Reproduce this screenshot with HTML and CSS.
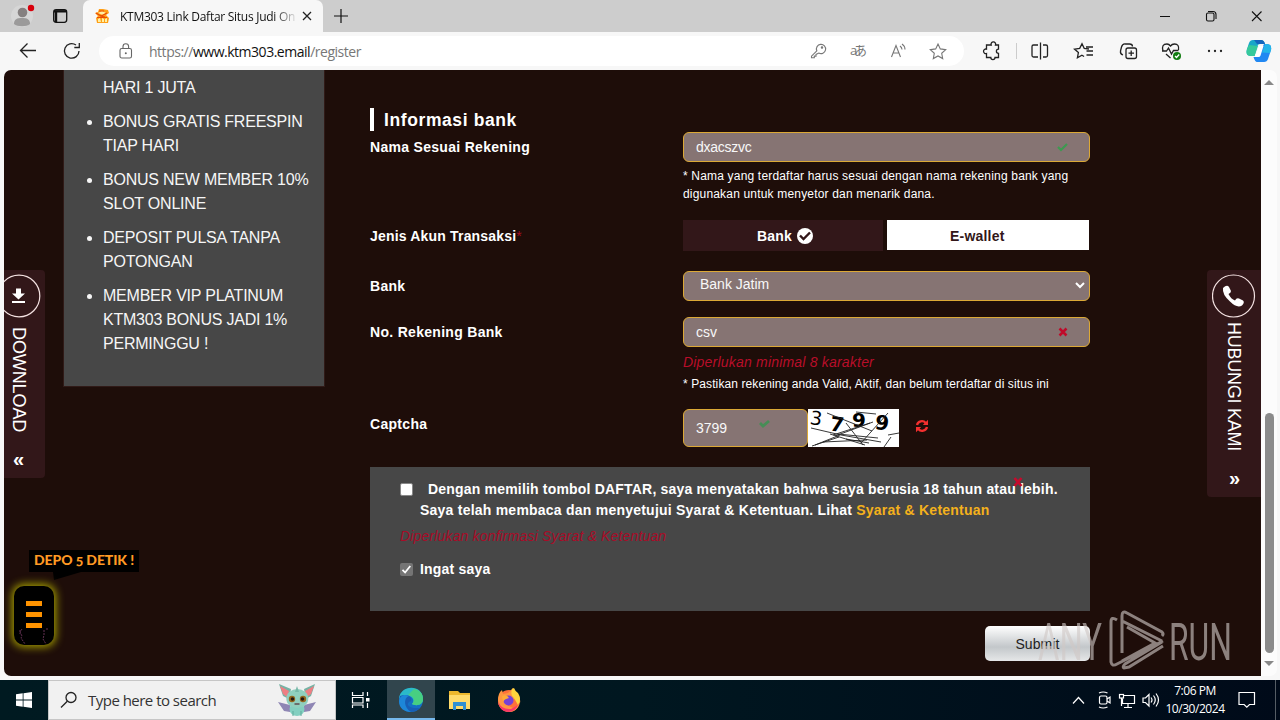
FILE: index.html
```html
<!DOCTYPE html>
<html lang="id">
<head>
<meta charset="utf-8">
<title>KTM303 Register</title>
<link rel="stylesheet" href="styles.css">
</head>
<body>
<div class="tabs">
  <div class="tabs-left">
    <svg width="83" height="32" viewBox="0 0 83 32"><circle cx="22" cy="16" r="11" fill="#d6d6d6"/><circle cx="22.500" cy="12.500" r="4.800" fill="#858080"/><path d="M14 24c0-5 3-6 8-6s8 1 8 6c-3 3-13 3-16 0z" fill="#9b9a9a"/><circle cx="31" cy="8" r="3.200" fill="#d8000c"/><rect x="53.700" y="9.700" width="13" height="12.600" rx="2.500" fill="none" stroke="#111" stroke-width="1.300"/><path d="M54 11.300h12.500" stroke="#111" stroke-width="2.400"/><path d="M56 12v10" stroke="#111" stroke-width="2.400"/></svg>
  </div>
  <div class="tab">
    <svg width="16" height="16" viewBox="0 0 16 16"><path d="M1 5l3-1 1-3 4 0 5 1 1 3-3 2 3 3-1 5H3l-1-5 2-2z" fill="#ff9f17"/><path d="M4 5l4-2 4 2-3 2zM4 11l2-1 1 4-3 0zM8 10l2 1v3H8zM11 11l2-1v4h-2z" fill="#fff0a5"/><path d="M2 5l5 3 6-3M3 9.500h10M5 3l5 0M6 8l5 1" stroke="#e94a05" stroke-width="1.200" fill="none"/></svg>
    <span class="tab-title">KTM303 Link Daftar Situs Judi On</span>
    <svg class="tab-x" width="10" height="10" viewBox="0 0 10 10"><path d="M1 1l8 8M9 1l-8 8" stroke="#222" stroke-width="1.300"/></svg>
  </div>
  <svg class="plus" width="14" height="14" viewBox="0 0 14 14"><path d="M7 0v14M0 7h14" stroke="#111" stroke-width="1.200"/></svg>
  <svg class="winbtns" width="120" height="32" viewBox="0 0 120 32"><path d="M0 16.500h10M92 11.500l9.500 9.500M101.500 11.500L92 21" stroke="#111" stroke-width="1.100"/><rect x="46.500" y="13" width="7.500" height="8" rx="1.500" fill="none" stroke="#111" stroke-width="1.100"/><path d="M48 11.500h5q3 0 3 3v4.500" fill="none" stroke="#111" stroke-width="1.100"/></svg>
</div>
<div class="toolbar">
  <svg class="nav" width="83" height="38" viewBox="0 0 83 38"><path d="M36 18.500H20.500M27.500 11.500l-7 7 7 7" fill="none" stroke="#222" stroke-width="1.300"/><path d="M79 19A7.300 7.300 0 1 1 76 13M79.300 11v4.500h-5" fill="none" stroke="#222" stroke-width="1.300"/></svg>
  <div class="address">
    <svg width="14" height="16" viewBox="0 0 14 16"><rect x="1" y="5.500" width="11.500" height="9.500" rx="1.800" fill="none" stroke="#666" stroke-width="1.100"/><path d="M4 5.500V3.500a2.800 2.800 0 0 1 5.600 0v2" fill="none" stroke="#666" stroke-width="1.100"/><circle cx="6.800" cy="10.200" r="1" fill="#666"/></svg>
    <div class="url">https://<b>www.ktm303.email</b>/register</div>
    <svg class="addr-icons" width="140" height="20" viewBox="0 0 140 20" fill="none" stroke="#777" stroke-width="1.100"><path d="M7.800 9.800L2.500 15.200v1.600h2.800v-1.700h1.700v-1.700l2.800-1.400a4.600 4.600 0 1 0-2-2.200z"/><circle cx="13" cy="6.500" r=".7" fill="#777"/><text class="aa" x="41" y="14" textLength="17">aあ</text><path d="M82.500 16L87 4.500 91.500 16M84 12h6M91 5q2 1.500 2 3.500M93 3q3 2 3 5.500"/><path d="M129 3l2.300 4.900 5.400.7-4 3.700 1 5.300-4.700-2.600-4.700 2.600 1-5.300-4-3.700 5.400-.7z"/></svg>
  </div>
  <svg class="tools" width="281" height="38" viewBox="0 0 281 38" fill="none" stroke="#222" stroke-width="1.300"><path d="M23 13h3.200a2.300 2.300 0 1 1 4.300 0H33.500v4.200a2.100 2.100 0 1 0 0 4.200V25.500h-3.500a2.100 2.100 0 0 1-4.200 0H21.500v-4a2.300 2.300 0 1 1 0-4.400V13z"/><path d="M51.500 11v16" stroke="#ccc" stroke-width="1"/><path d="M73 13h-4.500q-1.500 0-1.500 1.500v9q0 1.500 1.500 1.500h4.500M78 13h3q1.500 0 1.500 1.500v9q0 1.500-1.500 1.500h-3M75.500 10.500v17"/><path d="M124 17l-4.800-.6-2.200-4.700-2.300 4.700-5.200.7 3.900 3.500-1 5.200 4.500-2.600 2.200 1.300M121 15h7M121.500 19h6.500M121.500 23h6.500"/><rect x="161" y="16" width="10.500" height="10.500" rx="2"/><path d="M166.200 18.500v5.500M163.500 21.200h5.500M158 23q-3-1-2.500-4l1-4q1-3.500 4-3h4q3 0 3 2.500"/><path d="M198 19q-2-7 4-7 2 0 3.500 2 1.500-2 4-2 5 0 4 6M201 22l4.500 4M197 19h4.500l2-3 3 6 2-3.500h5"/><circle cx="212" cy="24" r="4" fill="#107c10" stroke="none"/><path d="M210 24l1.500 1.500 2.700-3" stroke="#fff"/><path d="M244 19h.01M250 19h.01M256 19h.01" stroke-width="2.300" stroke-linecap="round"/></svg>
  <svg class="copilot" width="26" height="24" viewBox="0 0 26 24"><path d="M7 1h8q3 0 4 4H14q-2 0-2.500 2L8.500 17H5q-6 0-4-7l2-6q1-3 4-3z" fill="#18a7c8"/><path d="M3 6l9 1-3.500 10H5q-6 0-4-7z" fill="#36c99b"/><path d="M8 1h7q3 0 4 4h-8z" fill="#1466bd"/><path d="M18 5h3q5 0 4 6l-3 9q-1 3-4 3h-7q-2 0-3.500-5H11q1.500 0 2-2z" fill="#2188f2"/><path d="M19 5h2q5 0 4 6l-1 3-8-.500z" fill="#24b5e8"/><path d="M13 7h4.500l-3 9.500q-.5 1.500-2 1.500H9z" fill="#fff"/></svg>
</div>

<div class="window">
  <main class="page">
    <aside class="promo">
      <p>HARI 1 JUTA</p>
      <ul>
        <li>BONUS GRATIS FREESPIN<br>TIAP HARI</li>
        <li>BONUS NEW MEMBER 10%<br>SLOT ONLINE</li>
        <li>DEPOSIT PULSA TANPA<br>POTONGAN</li>
        <li>MEMBER VIP PLATINUM<br>KTM303 BONUS JADI 1%<br>PERMINGGU !</li>
      </ul>
    </aside>
    <section class="form">
      <h2>Informasi bank</h2>
      <div class="row row-name"><div class="label">Nama Sesuai Rekening</div>
        <div><div class="field">dxacszvc<svg class="mark" width="12" height="10" viewBox="0 0 12 10"><path d="M1 5l3 3 6-6" fill="none" stroke="#3d9a50" stroke-width="2.200"/></svg></div>
          <p class="hint">* Nama yang terdaftar harus sesuai dengan nama rekening bank yang<br>digunakan untuk menyetor dan menarik dana.</p></div></div>
      <div class="row row-type"><div class="label">Jenis Akun Transaksi<span class="req">*</span></div>
        <div class="toggle"><div class="on">Bank <svg width="16" height="16" viewBox="0 0 16 16"><circle cx="8" cy="8" r="8" fill="#fff"/><path d="M3 7.500l3.500 3.500L13 4.500" fill="none" stroke="#321719" stroke-width="2.400"/></svg></div><div class="off">E-wallet</div></div></div>
      <div class="row row-bank"><div class="label">Bank</div><div class="field select">Bank Jatim<svg width="10" height="7" viewBox="0 0 10 7"><path d="M1 1l4 4 4-4" fill="none" stroke="#fff" stroke-width="2"/></svg></div></div>
      <div class="row row-acc"><div class="label">No. Rekening Bank</div>
        <div><div class="field">csv<svg class="mark" width="12" height="10" viewBox="0 0 12 10"><path d="M2.500 1.500l7 7M9.500 1.500l-7 7" stroke="#c00a2a" stroke-width="2.500"/></svg></div>
          <p class="error">Diperlukan minimal 8 karakter</p><p class="hint">* Pastikan rekening anda Valid, Aktif, dan belum terdaftar di situs ini</p></div></div>
      <div class="row row-cap"><div class="label">Captcha</div>
        <div class="captcha"><div class="field">3799<svg class="mark" width="12" height="10" viewBox="0 0 12 10"><path d="M1 4l3 3 6-5" fill="none" stroke="#478d56" stroke-width="2.800"/></svg></div>
          <svg class="cap-img" width="91" height="38" viewBox="0 0 91 38"><rect width="91" height="38" fill="#fff"/><g class="cap-text"><text x="2" y="15.500" transform="rotate(8 6 10)" class="thin">3</text><text x="22" y="22" transform="rotate(8 27 16)">7</text><text x="44" y="18">9</text><text x="67" y="20.500" transform="rotate(8 72 14)">9</text></g><path d="M3 19l30 7 40 7M19 4l45 18M22 25l35 11M38 14l17 22M25 26l37-12M27 27l38-14M7 36l25-10M30 25l40 4M53 34L80 4M48 3l20 2M76 38l7-10M80 26l11-2M38 30l23 4M15 33l44-2M4 37l27-9" fill="none" stroke="#222" stroke-width=".9"/></svg>
          <svg class="refresh" width="14" height="14" viewBox="0 0 14 14"><path d="M2 6a5 5 0 0 1 8.700-2M12 8a5 5 0 0 1-8.700 2" fill="none" stroke="#f42f2f" stroke-width="2.300"/><path d="M13 .7V6H7.800zM1 13.300V8h5.200z" fill="#f42f2f"/></svg>
        </div></div>
      <div class="terms">
        <svg class="terms-x" width="10" height="10" viewBox="0 0 10 10"><path d="M1.500 1l7 8M8.500 1l-7 8" stroke="#c50b2d" stroke-width="2.600"/></svg>
        <div class="check"><span class="box"></span><div><span class="agree1">Dengan memilih tombol DAFTAR, saya menyatakan bahwa saya berusia 18 tahun atau lebih.</span><br><span class="agree2">Saya telah membaca dan menyetujui Syarat &amp; Ketentuan. Lihat <a>Syarat &amp; Ketentuan</a></span></div></div>
        <p class="terms-error">Diperlukan konfirmasi Syarat &amp; Ketentuan</p>
        <div class="check remember"><span class="box checked"><svg width="13" height="13" viewBox="0 0 13 13"><path d="M2.500 6.800l2.600 2.700 5.200-6.500" fill="none" stroke="#fff" stroke-width="1.800"/></svg></span><div>Ingat saya</div></div>
      </div>
      <div class="submit">Submit</div>
    </section>

    <div class="side side-left"><svg width="43" height="44" viewBox="0 0 43 44"><circle cx="15" cy="22" r="20.800" fill="none" stroke="#f4e2e2" stroke-width="1.200"/><path d="M12 14.500h5v5h4l-6.500 6-6.500-6h4zM8 27h13v2H8z" fill="#fff"/></svg><span>DOWNLOAD</span><i>«</i></div>
    <div class="side side-right"><svg width="44" height="44" viewBox="0 0 44 44"><circle cx="21.500" cy="22" r="21" fill="none" stroke="#f4e2e2" stroke-width="1.200"/><path d="M11 14q4-4 6-1l2 4q0 2-2.500 3 2.500 5 6.500 6.500 1.500-3 4-2l4 2q2 2-1 5-5 3-12-4-8-7-7-13.500z" fill="#fff"/></svg><span>HUBUNGI KAMI</span><i>»</i></div>

    <div class="depo">DEPO 5 DETIK !<svg width="28" height="8" viewBox="0 0 28 8"><path d="M0 0h28L1 8z" fill="#000"/></svg></div>
    <div class="burger"><b></b><b></b><b></b><svg width="32" height="18" viewBox="0 0 32 18"><path d="M5 2L3 5l2 4-1 2 4 6M3 3v4M27 3v5l-1 4 3 5M30 1v3" fill="none" stroke="#633052" stroke-width="1" stroke-dasharray="2 1"/></svg></div>
  </main>
  <div class="scroll"><i class="up"></i><div class="thumb"></div><i class="down"></i></div>
</div>

<div class="taskbar">
  <div class="start"><svg width="16" height="16" viewBox="0 0 16 16"><path d="M0 2.300l6.700-1v6.300H0zM7.500 1.200L16 0v7.600H7.500zM0 8.400h6.700v6.300l-6.700-1zM7.500 8.400H16V16l-8.500-1.200z" fill="#fff"/></svg></div>
  <div class="search"><svg width="18" height="18" viewBox="0 0 18 18"><circle cx="11" cy="6.500" r="5" fill="none" stroke="#222" stroke-width="1.300"/><path d="M7.300 10.200L1 16.500" stroke="#222" stroke-width="1.300"/></svg><span>Type here to search</span>
    <svg class="pet" width="40" height="34" viewBox="0 0 40 34"><path d="M1 19l12 3v7l-6-1zM39 19l-12 3v7l6-1z" fill="#8f86b4"/><path d="M2 1l12 5-2 10-6-3zM38 1L27 6l2 10 5-3z" fill="#76b3a5"/><path d="M3 3l9 5-2 6-4-3zM37 3l-9 5 2 6 4-3z" fill="#ee7e83"/><ellipse cx="20" cy="26" rx="7.500" ry="7" fill="#83cfc0"/><ellipse cx="20.300" cy="15.500" rx="11" ry="9.500" fill="#90cfbe"/><path d="M20 3l2 6h-4z" fill="#77b7a8"/><circle cx="15" cy="16" r="3.200" fill="#94671f"/><circle cx="26" cy="16" r="3.200" fill="#94671f"/><circle cx="15.500" cy="16" r="1.800" fill="#251713"/><circle cx="25.500" cy="16" r="1.800" fill="#251713"/><path d="M17.500 21h5" stroke="#604e50" stroke-width="1.500"/><path d="M16 28v5M24 28v5" stroke="#5fa99a"/></svg></div>
  <svg class="apps" width="190" height="40" viewBox="0 0 190 40"><path d="M16.500 12v3.500h10.500V12M16.500 28v-3h10.500v3M16.500 17.500h10.500v5.500H16.500zM31.500 12v4M31.500 23v5" fill="none" stroke="#fff" stroke-width="1.200"/><rect x="30" y="18" width="3.500" height="3.500" fill="#fff"/><rect x="51" width="48" height="40" fill="#31454d"/><rect x="51" y="38" width="48" height="2" fill="#76b9ed"/><circle cx="75" cy="20" r="12" fill="#1470c5"/><path d="M63 19C64 4 87 4 87 19c0 7-8 7-11 5 3-3 1-7-3-8-4-1-8 0-10 3z" fill="#2bb9c9"/><path d="M78 9c6 1 9 5 9 10 0 7-8 7-11 5 4-4 1-8-4-9z" fill="#47cf82"/><path d="M64 16c7-3 13 1 11 5-6 2-4 8 9 7-6 6-15 4-18-1-3-4-3-8-2-11z" fill="#185eb5"/><path d="M63 21c1-6 6-7 10-5-6 2-5 12 2 16-7 0-12-4-12-11z" fill="#1d86d8"/><path d="M113 11h9l2 2h10v16h-21z" fill="#edb82d"/><path d="M113 15h21v14h-21z" fill="#ffdb6b"/><path d="M117 22h13v8h-3v-4h-7v4h-3z" fill="#2f8fd2"/><circle cx="173" cy="21" r="11" fill="#ff7139"/><path d="M162 20q0-7 4-10l1 4 5-1 5-5q1 3 4 5 4 5 3 10-5-5-10-4l-3 6 6 3 6-3q-3 7-10 7-11-2-11-12z" fill="#ff9640"/><path d="M176 9l2-1q1 3 4 5 4 6 0 12l-4-7q-4-3-2-9z" fill="#ffd43d"/><circle cx="172.500" cy="20.500" r="5" fill="#7641d5"/><path d="M162 21q3 9 13 8l7-4q-3 7-10 7-9-1-10-11z" fill="#f93768"/><path d="M166 16q5-2 7 2-5 1-6 4z" fill="#ffac37"/></svg>
  <svg class="tray" width="96" height="40" viewBox="0 0 96 40" fill="none" stroke="#fff" stroke-width="1.200"><path d="M9 23.500l5.500-6 5.500 6"/><rect x="35.500" y="16" width="7.500" height="8" rx="1.500"/><path d="M43 19l3-2v6l-3-2M35 13q4-2 8.500 0M35 27q4 2 8.500 0"/><path d="M60 15.500h10.500v8H58.500v-5M64 24v3M60 27.500h8"/><rect x="55.500" y="14.500" width="4" height="3.500"/><path d="M57.500 18v8"/><path d="M79 18h2.500l3.500-3.500v11.500l-3.500-3.500H79zM87 17.500q2 2.500 0 5M89.500 15.500q3.500 4.500 0 9M92 13.500q5 6.500 0 13"/></svg>
  <div class="clock"><span>7:06 PM</span><span class="date">10/30/2024</span></div>
  <svg class="note" width="18" height="18" viewBox="0 0 18 18"><path d="M1 1.500h15.500v12h-5l-2.700 2.700-2.700-2.700H1z" fill="none" stroke="#fff" stroke-width="1.200"/></svg>
  <i class="peek"></i>
</div>

<svg class="watermark" width="200" height="66" viewBox="0 0 200 66" fill="none" stroke="#d0c8c6"><g class="wm-text"><text x="4" y="52.500" textLength="64" lengthAdjust="spacingAndGlyphs">ANY</text><text x="135" y="52.500" textLength="63" lengthAdjust="spacingAndGlyphs">RUN</text></g><path d="M83 13q-6-4-6 2v40q1 5 6 2l46-23M88 46V14l40 20M88 14V9q0-6 5-3l35 19q2 2 0 4M93 20l28 16-33 18M128 35L91 57q-3 3-1 4l5-1 34-21" stroke-width="3"/></svg>
</body>
</html>
```
FILE: styles.css
```css
*{box-sizing:border-box}
body{margin:0;width:1280px;height:720px;overflow:hidden;background:#f7f7f7;font-family:"Liberation Sans",Arial,sans-serif;display:flex;flex-direction:column;position:relative}
svg{display:block;flex:none}
p,h2,ul{margin:0;padding:0}
.tabs{height:32px;background:#cdcdcd;display:flex;align-items:center;flex:none}
.tabs-left{width:83px}
.tab{width:240px;height:32px;background:#f7f7f7;border-radius:7px 7px 0 0;display:flex;align-items:center;padding:0 10px 0 11px}
.tab-title{font:12px "Open Sans",sans-serif;color:#111;margin-left:10px;width:176px;white-space:nowrap;letter-spacing:-.27px;-webkit-mask-image:linear-gradient(90deg,#000 154px,transparent 178px);mask-image:linear-gradient(90deg,#000 154px,transparent 178px)}
.tab-x{margin-left:6px}
.plus{margin-left:11px}
.winbtns{margin-left:auto}
.toolbar{height:38px;display:flex;align-items:center;flex:none;background:#f7f7f7}
.nav{margin-right:16px}
.address{width:865px;height:30px;border-radius:15px;background:#fff;display:flex;align-items:center;padding-left:20px}
.url{margin-left:16px;font:14px "Open Sans",sans-serif;color:#777;letter-spacing:-.48px}
.url b{font-weight:400;color:#111}
.addr-icons{margin-left:auto;margin-right:15px}
.aa{font:13px "Open Sans","Noto Sans CJK JP",sans-serif;fill:#777;stroke:none}
.tools{margin-left:1px}
.copilot{background:#f7f7f7}
.window{height:610px;display:flex;padding:0 0 4px 4px;flex:none}
.page{width:1257px;height:606px;background:#1e0d09;border-radius:7px 0 0 7px;position:relative;overflow:hidden;display:flex;align-items:flex-start}
.promo{width:260px;height:316px;margin-left:60px;background:#474747;color:#f6f6f6;font-size:16px;line-height:24px;padding:6px 0 0 39px;flex:none;box-shadow:0 0 0 1px #301a17;white-space:nowrap;letter-spacing:-.22px}
.promo li{margin-top:10px}
.form{width:720px;margin-left:46px;padding-top:38px;color:#fff;font-size:14px}
h2{height:23px;border-left:4px solid #fff;padding-left:10px;font-size:17.5px;line-height:24px;letter-spacing:.6px}
.row{display:grid;grid-template-columns:313px 407px}
.label{font-weight:700;letter-spacing:.3px;line-height:30px;color:#fff}
.req{color:#a20f20;font-weight:400}
.row-name{height:88px;margin-top:1px}
.row-type{height:51px}
.row-type .label{line-height:32px;letter-spacing:.18px}
.row-bank{height:46px}
.row-acc{height:92px}
.row-cap{height:58px}
.field{height:30px;border:1px solid #dca936;border-radius:6px;background:#867473;display:flex;align-items:center;justify-content:space-between;padding:0 20px 0 12px;color:#f8f8f8}
.row-name .field{letter-spacing:-.25px}
.hint{font-size:12px;line-height:18px;letter-spacing:.18px;white-space:nowrap}
.row-name .hint{margin-top:5px}
.toggle{display:flex;gap:4px;height:31px;font-weight:700;letter-spacing:.2px}
.on{width:200px;background:#321719;display:flex;align-items:center;justify-content:center;gap:5px;padding-left:4px}
.off{width:202px;height:30px;background:#fff;color:#321719;display:flex;align-items:center;padding:2px 0 0 63px}
.row-bank .label{line-height:31px}
.select{padding:0 4px 4px 16px}
.select svg{margin-top:3px}
.error{font-size:14px;line-height:22px;font-style:italic;color:#b90d29;letter-spacing:.2px;margin-top:4px}
.row-acc .hint{line-height:22px;letter-spacing:.1px}
.captcha{display:flex;height:38px}
.captcha .field{width:125px;height:38px;padding-right:36px}
.captcha .mark{margin-top:-8px}
.cap-text{font:700 20px "DejaVu Sans",sans-serif;fill:#000}
.cap-text .thin{font-weight:400;font-size:19px}
.refresh{margin:10px 0 0 16px}
.terms{position:relative;height:144px;background:#474747;padding:12px 30px;font-weight:700;line-height:21px;white-space:nowrap}
.terms-x{position:absolute;left:643px;top:10px}
.check{display:flex}
.box{width:13px;height:13px;background:#fff;border:1px solid #888;border-radius:2px;margin:4px 7px 0 0;flex:none}
.box.checked{background:#757575;border:0}
.agree1{margin-left:8px;letter-spacing:.19px}
.agree2{letter-spacing:.23px}
.terms a{color:#f4b11c}
.terms-error{font-size:14px;font-weight:400;font-style:italic;color:#a80c27;letter-spacing:.16px;margin:5px 0 12px;line-height:21px}
.remember{letter-spacing:.2px}
.submit{width:105px;height:35px;margin:15px 0 0 615px;border-radius:5px;background:linear-gradient(#fff,#c3c7ca 60%,#e6e7e8);color:#222;display:flex;align-items:center;justify-content:center;letter-spacing:.1px}
.side{position:absolute;top:200px;background:#321719;color:#fff;display:flex;flex-direction:column;font-size:18px}
.side span{writing-mode:vertical-rl;line-height:20px}
.side i{font-style:normal;font-weight:700;font-size:20px;line-height:20px}
.side-left{left:0;width:41px;height:208px;border-radius:0 4px 4px 0;padding-top:4px}
.side-left span{margin:9px 0 0 5px;width:20px;height:118px;letter-spacing:-.1px}
.side-left i{margin-left:9px;margin-top:4px}
.side-right{left:1203px;width:54px;height:227px;border-radius:4px 0 0 4px;padding:4px 0 0 5px}
.side-right span{margin:4px 0 0 12px;width:20px;height:140px;letter-spacing:-.25px}
.side-right i{margin:6px 0 0 17px}
.depo{position:absolute;left:25px;top:480px;width:110px;height:22px;background:#000;color:#ff9a24;font:900 14px/19px Lato,sans-serif;font-variant-numeric:oldstyle-nums;padding-left:5px;white-space:nowrap;letter-spacing:-.1px}
.depo svg{position:absolute;left:24px;top:22px}
.burger{position:absolute;left:10px;top:516px;width:40px;height:59px;border-radius:10px;background:#000;box-shadow:0 0 9px 2px #a6a000;padding:15px 12px;display:flex;flex-direction:column;gap:6px}
.burger b{display:block;width:16px;height:5px;background:#ff9300}
.burger svg{position:absolute;left:3px;top:41px}
.scroll{width:16px;height:606px;background:#fcfcfc;display:flex;flex-direction:column;align-items:center;border-radius:0 7px 7px 0}
.up,.down{border:5px solid transparent;border-top:0;border-bottom:5px solid #888;margin-top:10px}
.thumb{width:9px;height:240px;border-radius:5px;background:#8b8b8b;margin-top:328px}
.down{border-bottom:0;border-top:5px solid #888;margin-top:8px}
.taskbar{height:40px;background:linear-gradient(90deg,#001a21,#001720 50%,#000a19);display:flex;align-items:center;flex:none;color:#fff}
.start{width:48px;padding-left:16px}
.search{width:288px;height:40px;background:#f1f1f1;border:1px solid #c6c6c6;display:flex;align-items:center;color:#333;padding-left:11px}
.search span{margin-left:10px;font:15px "Open Sans",sans-serif;letter-spacing:-.52px;white-space:nowrap;width:189px}
.tray{margin-left:538px}
.clock{width:70px;margin:0 8px 0 0;display:flex;flex-direction:column;align-items:center;font:12px/18px "Open Sans",sans-serif;letter-spacing:-.45px}
.peek{width:1px;height:40px;background:#555d65;margin-left:19px}
.watermark{position:absolute;left:1034px;top:607px;opacity:.62}
.wm-text{font:400 51px Roboto,sans-serif;fill:#d0c8c6;stroke:none}
```
